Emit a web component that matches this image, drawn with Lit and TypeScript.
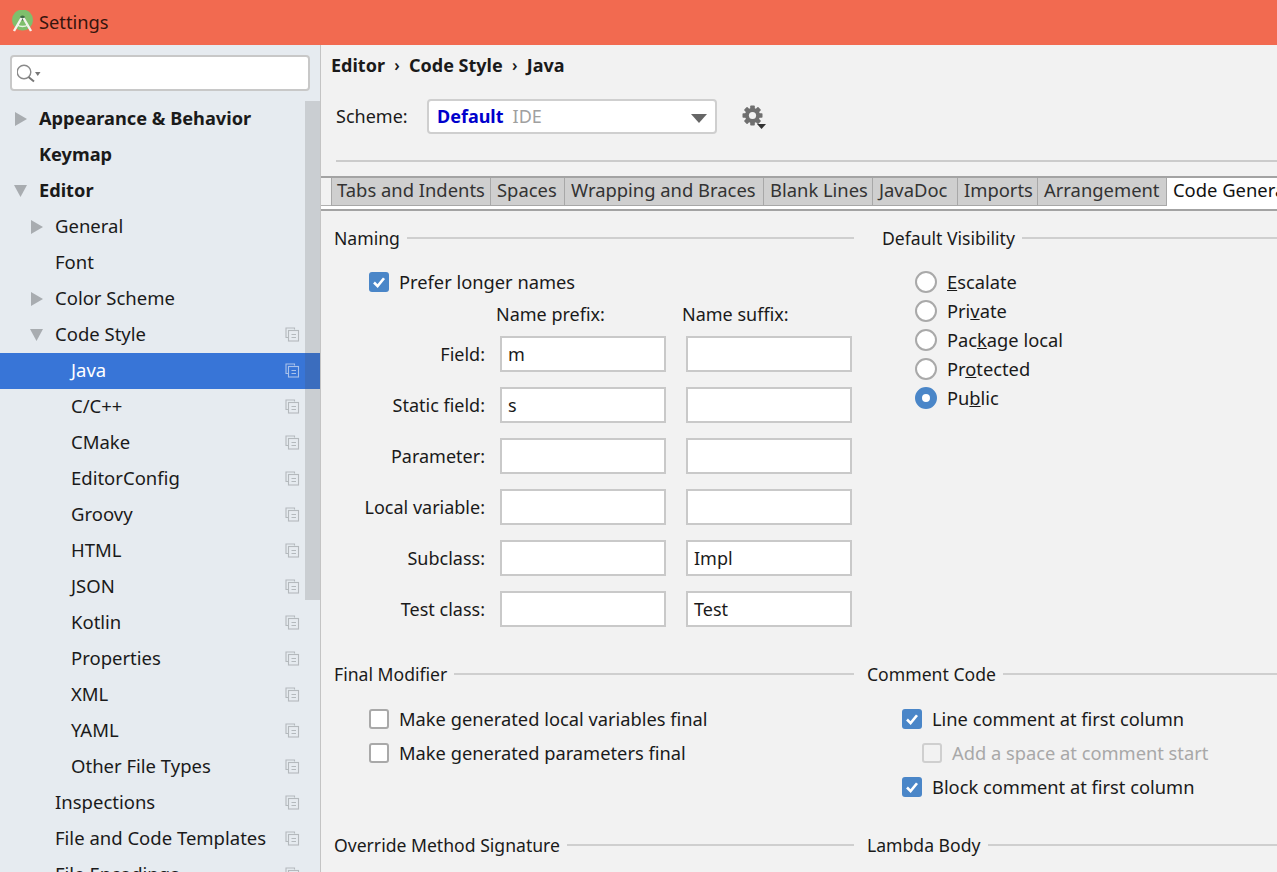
import { LitElement, html, css, svg } from "lit";
import { customElement } from "lit/decorators.js";

type Node = { t: string; d: number; a?: "r" | "d"; b?: boolean; c?: boolean; s?: boolean };
const tree: Node[] = [
  { t: "Appearance & Behavior", d: 0, a: "r", b: true },
  { t: "Keymap", d: 0, b: true },
  { t: "Editor", d: 0, a: "d", b: true },
  { t: "General", d: 1, a: "r" },
  { t: "Font", d: 1 },
  { t: "Color Scheme", d: 1, a: "r" },
  { t: "Code Style", d: 1, a: "d", c: true },
  { t: "Java", d: 2, c: true, s: true },
  { t: "C/C++", d: 2, c: true },
  { t: "CMake", d: 2, c: true },
  { t: "EditorConfig", d: 2, c: true },
  { t: "Groovy", d: 2, c: true },
  { t: "HTML", d: 2, c: true },
  { t: "JSON", d: 2, c: true },
  { t: "Kotlin", d: 2, c: true },
  { t: "Properties", d: 2, c: true },
  { t: "XML", d: 2, c: true },
  { t: "YAML", d: 2, c: true },
  { t: "Other File Types", d: 2, c: true },
  { t: "Inspections", d: 1, c: true },
  { t: "File and Code Templates", d: 1, c: true },
  { t: "File Encodings", d: 1, c: true },
];
const tabs = ["Tabs and Indents", "Spaces", "Wrapping and Braces", "Blank Lines", "JavaDoc", "Imports", "Arrangement", "Code Generation"];
const fields = [
  ["Field:", "m", ""],
  ["Static field:", "s", ""],
  ["Parameter:", "", ""],
  ["Local variable:", "", ""],
  ["Subclass:", "", "Impl"],
  ["Test class:", "", "Test"],
];

const copyIcon = html`<svg class="copy" width="15" height="15" viewBox="0 0 15 15" fill="none" stroke="currentColor" stroke-width="1.1">
  <path d="M9.5 2.5V1H1v9.5h2.5" />
  <rect x="3.5" y="3.5" width="10" height="10.5" />
  <path d="M6.5 7.5h4.5M6.5 10.5h4.5" />
</svg>`;

const gearTeeth = [0, 45, 90, 135].map(
  (r) => svg`<rect x="8.2" y="0.5" width="4.6" height="20" rx="0.8" fill="#6f6f6f" transform="rotate(${r} 10.5 10.5)" />`
);

@customElement("app-root")
export class AppRoot extends LitElement {
  static styles = css`
    :host {
      display: block;
      width: 100vw;
      height: 100vh;
      overflow: hidden;
      font-family: "Noto Sans", "Open Sans", sans-serif;
      font-size: 18.3px;
      color: #1a1a1a;
      background: #f2f2f2;
    }
    .title {
      height: 45px;
      background: #f26a50;
      display: flex;
      align-items: center;
      gap: 5px;
      padding: 0 0 2px 11px;
      color: #35140d;
      box-sizing: border-box;
    }
    .body {
      height: calc(100vh - 45px);
      display: flex;
    }
    .side {
      position: relative;
      width: 320px;
      flex: none;
      background: #e6ebf0;
      border-right: 1px solid #c4c4c4;
      overflow: hidden;
    }
    .search {
      margin: 10px 10px 0 10px;
      width: 300px;
      height: 36px;
      box-sizing: border-box;
      background: #fff;
      border: 2px solid #c8c8c8;
      border-radius: 4px;
      display: flex;
      align-items: center;
      padding-left: 5px;
    }
    .tree {
      margin-top: 10px;
      font-size: 18.5px;
    }
    .node {
      height: 36px;
      box-sizing: border-box;
      padding-bottom: 4px;
      display: flex;
      align-items: center;
      position: relative;
      white-space: nowrap;
    }
    .node.b {
      font-weight: 700;
      font-size: 18.2px;
      padding-bottom: 2px;
    }
    .node.s {
      background: #3875d7;
      color: #fff;
    }
    .arrow {
      position: absolute;
      top: 11px;
    }
    .copy {
      position: absolute;
      left: 285px;
      top: 10px;
      color: #b4b9bd;
    }
    .node.s .copy {
      color: #a9c2ea;
    }
    .thumb {
      position: absolute;
      left: 305px;
      top: 56px;
      width: 15px;
      height: 499px;
      background: rgba(80, 80, 80, 0.18);
    }
    .main {
      flex: 1;
      min-width: 0;
      overflow: hidden;
    }
    .crumbs {
      height: 39px;
      padding-left: 10px;
      display: flex;
      align-items: center;
      font-weight: 700;
      font-size: 18px;
      white-space: nowrap;
    }
    .sep {
      width: 24px;
      text-align: center;
      font-weight: 600;
      font-size: 16px;
    }
    .scheme {
      margin: 15px 0 0 15px;
      height: 34px;
      display: flex;
      align-items: center;
      white-space: nowrap;
      font-size: 18px;
    }
    .scheme-label {
      width: 91px;
    }
    .combo {
      width: 290px;
      height: 35px;
      box-sizing: border-box;
      background: #fff;
      border: 2px solid #cfcfcf;
      border-radius: 4px;
      display: flex;
      align-items: center;
      padding-left: 8px;
      position: relative;
    }
    .combo b {
      color: #0000cc;
      margin-right: 9px;
    }
    .combo span {
      color: #a0a0a0;
    }
    .combo svg {
      position: absolute;
      right: 8px;
      top: 13px;
    }
    .gear {
      margin: 8px 0 0 25px;
      display: block;
    }
    .rule {
      margin: 27px 0 0 15px;
      height: 2px;
      background: #cbcbcb;
    }
    .tabs {
      margin-top: 14px;
      height: 35px;
      box-sizing: border-box;
      border-top: 2px solid #a3a3a3;
      border-bottom: 2px solid #a3a3a3;
      background: #fff;
    }
    .tabrow {
      display: grid;
      grid-template-columns: 10px 160px 74px 199px 109px 85px 80px 129px 1fr;
      height: 28px;
      white-space: nowrap;
      font-size: 18.4px;
    }
    .pad {
      background: #f2f2f2;
      border-bottom: 1px solid #b0b0b0;
    }
    .tab {
      background: #cfcfcf;
      color: #333;
      border-right: 1px solid #a8a8a8;
      border-bottom: 1px solid #a8a8a8;
      padding-left: 6px;
      line-height: 24px;
      overflow: hidden;
    }
    .tab.first {
      border-left: 1px solid #a8a8a8;
      padding-left: 5px;
    }
    .tab.on {
      background: #fff;
      color: #111;
      border: 0;
    }
    .content {
      padding: 17px 0 0 13px;
    }
    .grid {
      display: grid;
      grid-template-columns: 520px 1fr;
    }
    .top {
      column-gap: 28px;
    }
    .low {
      column-gap: 13px;
    }
    .legend {
      height: 20px;
      display: flex;
      align-items: center;
      gap: 7px;
      white-space: nowrap;
      font-size: 17.6px;
    }
    .legend span {
      padding-bottom: 1px;
    }
    .legend i {
      flex: 1;
      height: 2px;
      background: #cfcfcf;
    }
    .check {
      display: flex;
      align-items: center;
      gap: 10px;
      height: 20px;
      white-space: nowrap;
    }
    .box {
      width: 20px;
      height: 20px;
      box-sizing: border-box;
      border-radius: 3px;
      border: 2px solid #a9a9a9;
      background: #fff;
      flex: none;
    }
    .box.on {
      border: 0;
      background: #4a86c8;
    }
    .box svg {
      display: block;
    }
    .check span,
    .radio span {
      padding-bottom: 1px;
    }
    .check.dis {
      color: #a8a8a8;
    }
    .check.dis .box {
      background: transparent;
      border-color: #cfcfcf;
    }
    .ind-l {
      padding-left: 35px;
      margin-top: 24px;
    }
    .ind-l.first-low {
      margin-top: 25px;
    }
    .ind-r {
      padding-left: 35px;
      margin-top: 25px;
      display: flex;
      flex-direction: column;
      gap: 14px;
    }
    .ind-l.stack {
      display: flex;
      flex-direction: column;
      gap: 14px;
    }
    .check.sub {
      margin-left: 20px;
    }
    .form {
      display: grid;
      grid-template-columns: 166px 186px 166px;
      row-gap: 15px;
      align-items: center;
      margin-top: 14px;
      white-space: nowrap;
      font-size: 18px;
    }
    .form .lab {
      text-align: right;
      padding-right: 15px;
    }
    .heads {
      display: grid;
      grid-template-columns: 162px 186px auto;
      height: 20px;
      align-items: center;
      white-space: nowrap;
      margin-top: 10px;
      font-size: 18px;
    }
    .heads span:first-child {
      grid-column: 2;
    }
    .input {
      width: 166px;
      height: 36px;
      box-sizing: border-box;
      background: #fff;
      border: 2px solid #c9c9c9;
      line-height: 32px;
      padding-left: 6px;
    }
    .radios {
      margin: 23px 0 0 33px;
      display: flex;
      flex-direction: column;
      gap: 7px;
    }
    .radio {
      display: flex;
      align-items: center;
      gap: 10px;
      height: 22px;
      white-space: nowrap;
    }
    .dot {
      width: 22px;
      height: 22px;
      box-sizing: border-box;
      border-radius: 50%;
      border: 2px solid #a9a9a9;
      background: #fff;
      flex: none;
    }
    .dot.on {
      border: 7.5px solid #4a86c8;
    }
    .section-2 {
      margin-top: 37px;
    }
    .section-3 {
      margin-top: 38px;
    }
  `;

  private renderCheck(label: string, on: boolean, cls = "") {
    return html`<div class="check ${cls}">
      <div class="box ${on ? "on" : ""}">
        ${on
          ? html`<svg width="20" height="20" viewBox="0 0 20 20"><path d="M5 10.5l3.6 3.6L15 6.2" fill="none" stroke="#fff" stroke-width="2.6" /></svg>`
          : ""}
      </div>
      <span>${label}</span>
    </div>`;
  }

  private renderRadio(pre: string, u: string, post: string, on = false) {
    return html`<div class="radio"><div class="dot ${on ? "on" : ""}"></div><span>${pre}<u>${u}</u>${post}</span></div>`;
  }

  render() {
    return html`
      <div class="title">
        <svg width="23" height="24" viewBox="0 0 23 24">
          <circle cx="11.5" cy="10" r="10.5" fill="#7fbf6c" />
          <circle cx="11.5" cy="8" r="2.6" fill="#3f6e46" />
          <path d="M10.5 8L3 21M12.5 8L20 21" stroke="#f4f4ee" stroke-width="2.4" fill="none" />
          <path d="M6 15q5.5 3 11 0" stroke="#e8f3e4" stroke-width="1.4" fill="none" />
        </svg>
        <span>Settings</span>
      </div>
      <div class="body">
        <aside class="side">
          <div class="search">
            <svg width="30" height="26" viewBox="0 0 30 26" fill="none">
              <circle cx="7" cy="12" r="6.8" stroke="#8a8a8a" stroke-width="1.4" />
              <path d="M11.5 17l5.5 4.5" stroke="#777" stroke-width="2" />
              <path d="M18 12h5.500l-2.750 4z" fill="#777" />
            </svg>
          </div>
          <div class="tree">
            ${tree.map(
              (n) => html`<div class="node ${n.b ? "b" : ""} ${n.s ? "s" : ""}" style="padding-left:${39 + n.d * 16}px">
                ${n.a === "r"
                  ? html`<svg class="arrow" style="left:${15 + n.d * 16}px" width="13" height="14" viewBox="0 0 13 14"><path d="M0 0l12 7-12 7z" fill="#a8acb0" /></svg>`
                  : n.a === "d"
                    ? html`<svg class="arrow" style="left:${14 + n.d * 16}px" width="14" height="14" viewBox="0 0 14 14"><path d="M0 1h13L6.500 13z" fill="#a8acb0" /></svg>`
                    : ""}
                <span>${n.t}</span>
                ${n.c ? copyIcon : ""}
              </div>`
            )}
          </div>
          <div class="thumb"></div>
        </aside>
        <main class="main">
          <div class="crumbs">Editor<span class="sep">›</span>Code Style<span class="sep">›</span>Java</div>
          <div class="scheme">
            <span class="scheme-label">Scheme:</span>
            <div class="combo">
              <b>Default</b><span>IDE</span>
              <svg width="16" height="9" viewBox="0 0 16 9"><path d="M0 0h16L8 9z" fill="#666" /></svg>
            </div>
            <svg class="gear" width="28" height="30" viewBox="0 0 28 30">
              ${gearTeeth}
              <circle cx="10.5" cy="10.5" r="7.5" fill="#6f6f6f" />
              <circle cx="10.5" cy="10.5" r="3.6" fill="#f2f2f2" />
              <path d="M15 19h9l-4.500 5z" fill="#333" />
            </svg>
          </div>
          <div class="rule"></div>
          <div class="tabs">
            <div class="tabrow">
              <div class="pad"></div>
              ${tabs.map(
                (t, i) => html`<div class="tab ${i === 0 ? "first" : ""} ${i === 7 ? "on" : ""}">${t}</div>`
              )}
            </div>
          </div>
          <div class="content">
            <div class="grid top">
              <section>
                <div class="legend"><span>Naming</span><i></i></div>
                <div class="ind-l">${this.renderCheck("Prefer longer names", true)}</div>
                <div class="heads"><span>Name prefix:</span><span>Name suffix:</span></div>
                <div class="form">
                  ${fields.map(
                    ([l, p, s]) => html`<div class="lab">${l}</div><div class="input">${p}</div><div class="input">${s}</div>`
                  )}
                </div>
              </section>
              <section>
                <div class="legend"><span>Default Visibility</span><i></i></div>
                <div class="radios">
                  ${this.renderRadio("", "E", "scalate")}
                  ${this.renderRadio("Pri", "v", "ate")}
                  ${this.renderRadio("Pac", "k", "age local")}
                  ${this.renderRadio("Pr", "o", "tected")}
                  ${this.renderRadio("Pu", "b", "lic", true)}
                </div>
              </section>
            </div>
            <div class="grid low section-2">
              <section>
                <div class="legend"><span>Final Modifier</span><i></i></div>
                <div class="ind-l stack first-low">
                  ${this.renderCheck("Make generated local variables final", false)}
                  ${this.renderCheck("Make generated parameters final", false)}
                </div>
              </section>
              <section>
                <div class="legend"><span>Comment Code</span><i></i></div>
                <div class="ind-r">
                  ${this.renderCheck("Line comment at first column", true)}
                  ${this.renderCheck("Add a space at comment start", false, "dis sub")}
                  ${this.renderCheck("Block comment at first column", true)}
                </div>
              </section>
            </div>
            <div class="grid low section-3">
              <section><div class="legend"><span>Override Method Signature</span><i></i></div></section>
              <section><div class="legend"><span>Lambda Body</span><i></i></div></section>
            </div>
          </div>
        </main>
      </div>
    `;
  }
}
